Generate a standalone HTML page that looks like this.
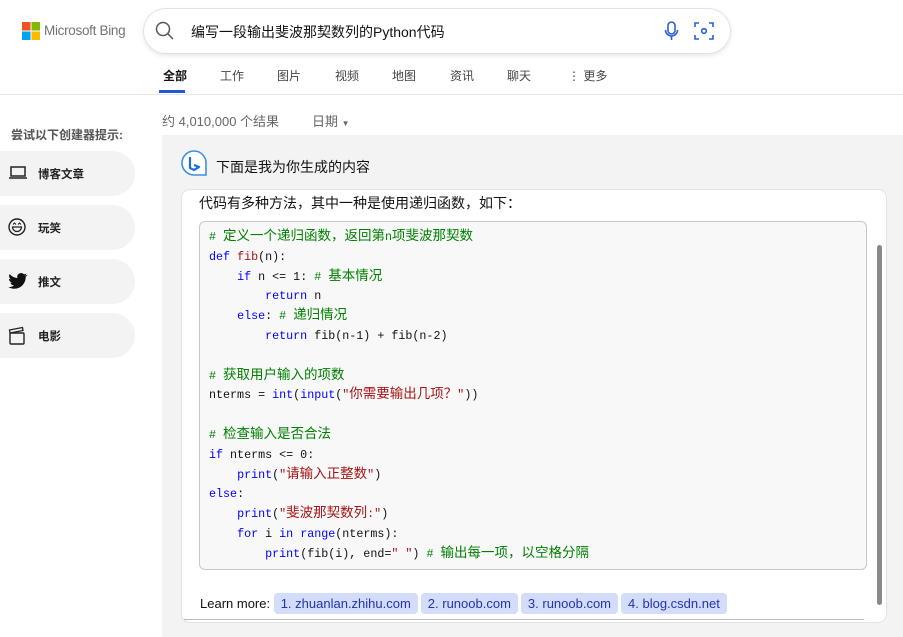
<!DOCTYPE html>
<html><head><meta charset="utf-8"><style>
*{box-sizing:border-box;margin:0;padding:0}
body{width:903px;height:637px;overflow:hidden;background:#fff;font-family:"Liberation Sans","Noto Sans CJK SC",sans-serif;position:relative;color:#111}
.abs{position:absolute}
.search{left:144px;top:9px;width:586px;height:44px;border-radius:22px;box-shadow:0 0 0 1px #e3e3e3,0 2px 6px rgba(0,0,0,.12);background:#fff}
.tabs span{position:absolute;top:67px;font-size:12px;color:#444}
.side{left:0;width:135px;height:45px;background:#f3f3f3;border-radius:0 23px 23px 0;font-size:11.5px;font-weight:bold;color:#222}
.side span{position:absolute;left:38px;top:15px}
.side svg{position:absolute;left:8px;top:13px}
pre{font-family:"Liberation Mono","Noto Sans CJK SC",monospace;font-size:11.7px;line-height:19.8px;color:#111}
.c{font-size:13.5px;line-height:10px}
.g{color:#008000}.b{color:#0000ff}.r{color:#a31515}
.lk{display:inline-block;background:#d3dcfb;color:#2335a8;border-radius:4px;padding:3px 7px;font-size:13px;margin-right:3px}
</style></head><body>
<svg class="abs" style="left:22px;top:22px" width="18" height="18"><rect width="8.5" height="8.5" fill="#f25022"/><rect x="9.5" width="8.5" height="8.5" fill="#7fba00"/><rect y="9.5" width="8.5" height="8.5" fill="#00a4ef"/><rect x="9.5" y="9.5" width="8.5" height="8.5" fill="#ffb900"/></svg>
<div class="abs" style="left:44px;top:23px;font-size:13.5px;color:#737373;letter-spacing:-0.3px">Microsoft Bing</div>
<div class="abs search"></div>
<svg class="abs" style="left:155px;top:21px" width="20" height="20"><circle cx="8" cy="8" r="6.5" fill="none" stroke="#555" stroke-width="1.5"/><line x1="13" y1="13" x2="18" y2="18" stroke="#555" stroke-width="1.5"/></svg>
<div class="abs" style="left:191px;top:22px;font-size:14px;color:#111">编写一段输出斐波那契数列的Python代码</div>
<svg class="abs" style="left:664px;top:21px" width="16" height="20"><rect x="4" y="1" width="7" height="12" rx="3.5" fill="none" stroke="#2b5fd9" stroke-width="1.6"/><path d="M1.5 9a6 6 0 0 0 12 0M7.5 15v4" fill="none" stroke="#2b5fd9" stroke-width="1.6"/></svg>
<svg class="abs" style="left:694px;top:21px" width="20" height="20"><path d="M1 6V2h4M15 2h4v4M19 14v4h-4M5 18H1v-4" fill="none" stroke="#2b5fd9" stroke-width="1.6"/><circle cx="10" cy="10" r="2.3" fill="none" stroke="#2b5fd9" stroke-width="1.6"/></svg>
<div class="tabs"><span style="left:163px;color:#111;font-weight:bold">全部</span><span style="left:220px">工作</span><span style="left:277px">图片</span><span style="left:335px">视频</span><span style="left:392px">地图</span><span style="left:450px">资讯</span><span style="left:507px">聊天</span><span style="left:568px">⋮ 更多</span></div>
<div class="abs" style="left:159px;top:90px;width:26px;height:3px;background:#1f58d8"></div>
<div class="abs" style="left:0;top:94px;width:903px;height:1px;background:#e8e8e8"></div>
<div class="abs" style="left:162px;top:111px;font-size:13px;color:#666">约 4,010,000 个结果</div>
<div class="abs" style="left:312px;top:111px;font-size:13px;color:#666">日期 <span style="font-size:8px">▼</span></div>
<div class="abs" style="left:11px;top:126px;font-size:12px;font-weight:bold;color:#555">尝试以下创建器提示:</div>
<div class="abs side" style="top:151px"><svg width="20" height="18"><rect x="3" y="3" width="14" height="9" fill="none" stroke="#222" stroke-width="1.5"/><line x1="1" y1="14" x2="19" y2="14" stroke="#222" stroke-width="1.5"/></svg><span>博客文章</span></div>
<div class="abs side" style="top:205px"><svg width="20" height="20"><circle cx="9" cy="9" r="8" fill="none" stroke="#222" stroke-width="1.4"/><path d="M4.5 9h9a4.5 4.5 0 0 1-9 0z" fill="none" stroke="#222" stroke-width="1.3"/><path d="M5 6.5l1.5-1.5 1.5 1.5M10 6.5l1.5-1.5 1.5 1.5" fill="none" stroke="#222"/></svg><span>玩笑</span></div>
<div class="abs side" style="top:259px"><svg width="20" height="20"><path d="M19 3c-.7.3-1.4.5-2.2.6.8-.5 1.4-1.2 1.7-2.1-.8.4-1.6.8-2.4.9A3.9 3.9 0 0 0 9.4 6C6.3 5.8 3.5 4.3 1.6 2c-1 1.8-.5 4 1.2 5.2-.6 0-1.2-.2-1.8-.5 0 1.9 1.3 3.5 3.2 3.9-.6.2-1.2.2-1.8.1.5 1.6 2 2.7 3.7 2.7A7.9 7.9 0 0 1 .3 15C2 16.1 4 16.7 6.2 16.7c7.4 0 11.5-6.1 11.5-11.5v-.5c.8-.6 1.4-1.2 1.9-2z" fill="#111"/></svg><span>推文</span></div>
<div class="abs side" style="top:313px"><svg width="20" height="20"><rect x="2" y="7" width="14" height="11" rx="1" fill="none" stroke="#222" stroke-width="1.4"/><path d="M2 7l-.5-3 13-2.5.5 3z" fill="none" stroke="#222" stroke-width="1.3"/></svg><span>电影</span></div>
<div class="abs" style="left:162px;top:135px;width:741px;height:502px;background:#f3f3f3"></div>
<svg class="abs" style="left:179px;top:149px" width="30" height="30"><path d="M15 2a12 12 0 1 0 0 24h12V15A12 12 0 0 0 15 2z" fill="#fff" stroke="#3a8fe6" stroke-width="1.6"/><path d="M11 8v11l4 2 5-3-5-2" fill="none" stroke="#1a6fe0" stroke-width="2.2" stroke-linejoin="round"/></svg>
<div class="abs" style="left:216px;top:157px;font-size:14px;color:#111">下面是我为你生成的内容</div>
<div class="abs" style="left:182px;top:190px;width:704px;height:432px;background:#fff;border-radius:8px;box-shadow:0 0 0 1px #e3e3e3"></div>
<div class="abs" style="left:199px;top:193px;font-size:14px;color:#111">代码有多种方法，其中一种是使用递归函数，如下：</div>
<div class="abs" style="left:199px;top:221px;width:668px;height:349px;background:#f8f8f8;border:1px solid #c8c8c8;border-radius:6px"></div>
<div class="abs" style="left:877px;top:245px;width:5px;height:360px;background:#8a8a8a;border-radius:3px"></div>
<pre class="abs" style="left:209px;top:228px"><span class="g"># <span class="c">定义一个递归函数，返回第</span>n<span class="c">项斐波那契数</span></span>
<span class="b">def</span> <span class="r">fib</span>(n):
    <span class="b">if</span> n &lt;= 1: <span class="g"># <span class="c">基本情况</span></span>
        <span class="b">return</span> n
    <span class="b">else</span>: <span class="g"># <span class="c">递归情况</span></span>
        <span class="b">return</span> fib(n-1) + fib(n-2)

<span class="g"># <span class="c">获取用户输入的项数</span></span>
nterms = <span class="b">int</span>(<span class="b">input</span>(<span class="r">"<span class="c">你需要输出几项？</span>"</span>))

<span class="g"># <span class="c">检查输入是否合法</span></span>
<span class="b">if</span> nterms &lt;= 0:
    <span class="b">print</span>(<span class="r">"<span class="c">请输入正整数</span>"</span>)
<span class="b">else</span>:
    <span class="b">print</span>(<span class="r">"<span class="c">斐波那契数列</span>:"</span>)
    <span class="b">for</span> i <span class="b">in</span> <span class="b">range</span>(nterms):
        <span class="b">print</span>(fib(i), end=<span class="r">" "</span>) <span class="g"># <span class="c">输出每一项，以空格分隔</span></span></pre>
<div class="abs" style="left:200px;top:593px;font-size:13px;color:#111">Learn more: <span class="lk">1. zhuanlan.zhihu.com</span><span class="lk">2. runoob.com</span><span class="lk">3. runoob.com</span><span class="lk">4. blog.csdn.net</span></div>
<div class="abs" style="left:184px;top:619px;width:680px;height:1px;background:#bbb"></div>
</body></html>
